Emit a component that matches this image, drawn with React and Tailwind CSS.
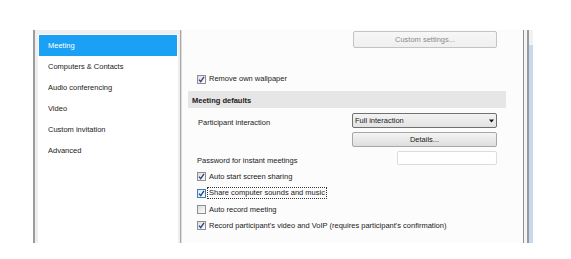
import React from 'react'

const navItems = ['Meeting', 'Computers & Contacts', 'Audio conferencing', 'Video', 'Custom invitation', 'Advanced']

function Check({ checked, hot }) {
  return (
    <span
      className={
        'flex h-[9px] w-[9px] shrink-0 items-center justify-center border ' +
        (hot
          ? 'border-[#3c7fb1] bg-gradient-to-br from-[#dcecfc] to-[#f4f9fe]'
          : 'border-[#8f8f8f] bg-gradient-to-br from-[#dedede] to-[#fbfbfb]')
      }
    >
      {checked && (
        <svg width="7" height="7" viewBox="0 0 7 7">
          <path d="M1 3.6 L2.7 5.6 L6 0.8" fill="none" stroke="#2a3d8f" strokeWidth="1.3" />
        </svg>
      )}
    </span>
  )
}

function CheckRow({ label, checked, hot, focused }) {
  return (
    <div className="flex h-[16.3px] items-center pl-[15px]">
      <Check checked={checked} hot={hot} />
      <span
        className={
          'ml-[1px] px-[1px] py-[1px] ' +
          (focused ? 'border border-dotted border-[#333]' : 'border border-transparent')
        }
      >
        {label}
      </span>
    </div>
  )
}

function Button({ children, className = '' }) {
  return (
    <div
      className={
        'flex items-center justify-center rounded-[2px] border border-[#a7a7a7] bg-gradient-to-b from-[#f4f4f4] to-[#dedede] ' +
        className
      }
    >
      {children}
    </div>
  )
}

export default function App() {
  return (
    <div className="h-[259px] w-[571px] overflow-hidden bg-white pl-[33px] pt-[30px] font-[family-name:'Liberation_Sans',Arial,sans-serif] text-[7.5px] leading-none text-[#1a1a1a]">
      <div className="flex h-[213px]">
        {/* Sidebar */}
        <div className="flex w-[147px] border-l-2 border-[#9d9d9d] bg-[#efefef] pl-[3px] pt-[4px] pr-[2px]">
          <div className="flex w-[140px] flex-col bg-white px-[1px] pt-[1px]">
            {navItems.map((item, i) => (
              <div
                key={item}
                className={
                  'flex h-[21px] items-center pl-[9px] pt-[1px] ' +
                  (i === 0 ? 'bg-[#1aa1f5] text-white' : 'text-[#1a1a1a]')
                }
              >
                {item}
              </div>
            ))}
          </div>
        </div>
        <div className="w-[2px] border-l border-[#a8a8a8] bg-[#dcdcdc]" />

        {/* Content */}
        <div className="flex w-[341px] flex-col bg-[#fcfcfc]">
          <div className="mt-[1px] flex justify-end pr-[26px]">
            <Button className="h-[17px] w-[144px] border-[#c3c3c3] from-[#f7f7f7] to-[#efefef] text-[#8a8a8a]">
              Custom settings...
            </Button>
          </div>

          <div className="mt-[23px]">
            <CheckRow label="Remove own wallpaper" checked />
          </div>

          <div className="mr-[17px] ml-[6px] mt-[4px] flex h-[17px] items-center bg-[#e6e6e6] pl-[4px] pt-[1px] font-bold">
            Meeting defaults
          </div>

          <div className="mt-[5px] flex items-center justify-between pl-[16px] pr-[26px]">
            <span className="pt-[3px]">Participant interaction</span>
            <div className="flex h-[15px] w-[145px] items-center justify-between rounded-[2px] border border-[#707070] bg-gradient-to-b from-[#f3f3f3] to-[#e3e3e3] pl-[2px] pr-[2px]">
              <span>Full interaction</span>
              <svg width="5" height="4" viewBox="0 0 5 4">
                <path d="M0 0.5 H5 L2.5 3.5 Z" fill="#111" />
              </svg>
            </div>
          </div>

          <div className="mt-[4px] flex justify-end pr-[26px]">
            <Button className="h-[15px] w-[145px] border-[#8a8a8a]">Details...</Button>
          </div>

          <div className="mt-[3px] flex items-center justify-between pl-[15px] pr-[26px]">
            <span className="pt-[7px]">Password for instant meetings</span>
            <div className="h-[14px] w-[100px] rounded-[2px] border border-[#dcdcdc] bg-white" />
          </div>

          <div className="mt-[4px] flex flex-col">
            <CheckRow label="Auto start screen sharing" checked />
            <CheckRow label="Share computer sounds and music" checked hot focused />
            <CheckRow label="Auto record meeting" />
            <CheckRow label="Record participant's video and VoIP (requires participant's confirmation)" checked />
          </div>
        </div>

        {/* Scrollbar */}
        <div className="flex w-[10px]">
          <div className="w-[1px] bg-[#8f8f8f]" />
          <div className="w-[3px] bg-[#f4f4f4]" />
          <div className="w-[2px] bg-[#9a9a9a]" />
          <div className="flex w-[4px] flex-col">
            <div className="h-[15px] bg-[#eef2f7]" />
            <div className="flex-1 bg-[#c8d8ee]" />
          </div>
        </div>
      </div>
    </div>
  )
}
